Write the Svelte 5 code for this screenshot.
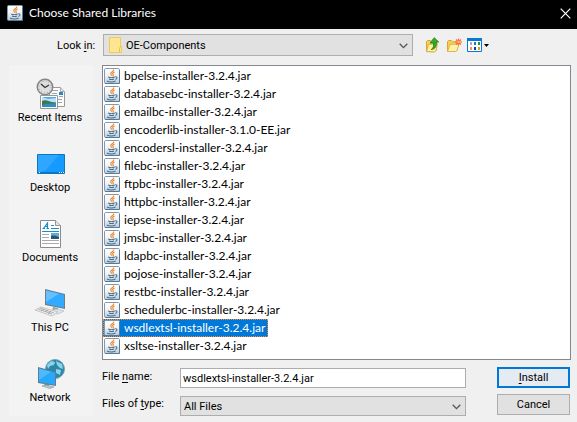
<script>
  const files = [
    'bpelse-installer-3.2.4.jar',
    'databasebc-installer-3.2.4.jar',
    'emailbc-installer-3.2.4.jar',
    'encoderlib-installer-3.1.0-EE.jar',
    'encodersl-installer-3.2.4.jar',
    'filebc-installer-3.2.4.jar',
    'ftpbc-installer-3.2.4.jar',
    'httpbc-installer-3.2.4.jar',
    'iepse-installer-3.2.4.jar',
    'jmsbc-installer-3.2.4.jar',
    'ldapbc-installer-3.2.4.jar',
    'pojose-installer-3.2.4.jar',
    'restbc-installer-3.2.4.jar',
    'schedulerbc-installer-3.2.4.jar',
    'wsdlextsl-installer-3.2.4.jar',
    'xsltse-installer-3.2.4.jar'
  ];
  const places = ['Recent Items', 'Desktop', 'Documents', 'This PC', 'Network'];
  let selected = $state('wsdlextsl-installer-3.2.4.jar');
</script>

{#snippet java()}
  <svg class="java" viewBox="0 0 16 16" aria-hidden="true">
    <defs>
      <linearGradient id="tile" x1="0" y1="0" x2="0" y2="1">
        <stop offset="0" stop-color="#fff" />
        <stop offset=".45" stop-color="#f1f4f7" />
        <stop offset="1" stop-color="#bccbd8" />
      </linearGradient>
    </defs>
    <rect x=".5" y=".5" width="15" height="15" rx="1.2" fill="url(#tile)" stroke="#8299ad" />
    <path d="M1 15.5h14.5V2" fill="none" stroke="#547b9c" />
    <path d="M9.700 1.500c.8 1.700-3 2.400-3 4 0 1 1 1.400 1 2.200M10.600 4c-2 .8-2.400 1.500-1.500 2.500.5.700.3 1.200-.4 1.700" fill="none" stroke="#ee8124" stroke-width="1.100" />
    <path d="M4.200 9c1.500.8 5 .7 6.500 0M5 11c1.600.6 3.600.6 5 0M3 13c2.300 1.100 6.400 1 8.600 0M11.200 8.800c2.400-.5 2.200 1.900.2 2.600" fill="none" stroke="#44708f" stroke-width="1.100" />
  </svg>
{/snippet}

{#snippet chevron()}
  <svg class="chevron" viewBox="0 0 9 6" aria-hidden="true"><path d="M.7.8 4.500 4.600 8.300.8" fill="none" stroke="#555" stroke-width="1.300" /></svg>
{/snippet}

<div class="dialog">
  <header>
    {@render java()}
    <h1>Choose Shared Libraries</h1>
    <button class="close" aria-label="Close">
      <svg width="11" height="11" viewBox="0 0 11 11"><path d="m.7.700 9.600 9.600M10.300.700.700 10.300" stroke="#fff" stroke-width="1.200" /></svg>
    </button>
  </header>

  <div class="lookin">
    <label for="folder">Look <u>i</u>n:</label>
    <div class="combo folder">
      <svg class="foldericon" width="13" height="16" viewBox="0 0 13 16" aria-hidden="true">
        <path d="M.5.500h11v9h1v6H.5z" fill="#ffe58f" stroke="#f0c95d" />
        <path d="M10.500 15v-3.500l1-2" fill="none" stroke="#e8be4b" />
      </svg>
      <select id="folder"><option>OE-Components</option></select>
      {@render chevron()}
    </div>
    <div class="tools">
      <button aria-label="Up one level">
        <svg width="16" height="16" viewBox="0 0 16 16">
          <path d="M1.500 14.500v-10l1-1h3l1 1.300h5v8l-2 2z" fill="#f4cf58" stroke="#d6a32c" />
          <path d="m1.500 14.500 2-7 9-1-1.500 7-1.500 1.500z" fill="#fff0a2" stroke="#ddb042" />
          <path d="M6.200 12.500c2.500-1.500 2.600-3.500 2.300-6.500H5.200L9.200.700 13.700 5h-2.500c.5 4.600-1 7.200-5 7.500z" fill="#35ac2a" stroke="#197a19" stroke-width=".8" />
        </svg>
      </button>
      <button aria-label="Create new folder">
        <svg width="16" height="16" viewBox="0 0 16 16">
          <path d="M1.500 14.500v-10l1-1h3l1 1.300h5v8l-2 1.700z" fill="#f3cd58" stroke="#d9a632" />
          <path d="m1.500 14.500 2.500-7 9-.5-2 6.500-1.500 1z" fill="#fff1a7" stroke="#e1b649" />
          <path d="M12.500 1.500v7M9 5h7M10 2.500l5 5M15 2.500l-5 5" stroke="#ff6540" stroke-width="1.200" />
          <circle cx="12.500" cy="5" r="1.300" fill="#ffc452" />
        </svg>
      </button>
      <button aria-label="View menu">
        <svg width="24" height="16" viewBox="0 0 24 16">
          <path d="M.5 1.500h14v13H.5z" fill="#fff" stroke="#0877d8" />
          <path d="M0 1h15v3H0z" fill="#0877d8" />
          <path d="M3 5h2v3H3z" fill="#ababc0" /><path d="M7 5h2v3H7z" fill="#2878d0" /><path d="M11 5h2v3h-2z" fill="#219344" />
          <path d="M3 10h2v3H3z" fill="#ff8a67" /><path d="M7 10h2v3H7z" fill="#173f7e" /><path d="M11 10h2v3h-2z" fill="#d3a223" />
          <path d="M17 7h5l-2.500 3z" fill="#000" />
        </svg>
      </button>
    </div>
  </div>

  <main>
    <nav aria-label="Places">
      {#each places as place, i}
        <button>
          <svg width="32" height="32" viewBox="0 0 32 32" aria-hidden="true">
            {#if i === 0}
              <path d="M15.500 9.500h11l4 4v15h-15z" fill="#fafafa" stroke="#999" />
              <path d="M26.500 9.500v4h4" fill="#e4e4e4" stroke="#aaa" />
              <path d="M18 12.500h6M18 15.500h5M24 21.500h4M24 24.500h4M25 18.500h4" stroke="#a5a5a5" />
              <path d="M25 14h4v3h-4z" fill="#2787c5" />
              <circle cx="11" cy="9" r="7.700" fill="#dedede" stroke="#858585" stroke-width="1.500" />
              <circle cx="11" cy="9" r="6" fill="none" stroke="#888" stroke-dasharray=".7 2.440" />
              <path d="m7 6 4 3.500 4-2.500" fill="none" stroke="#333" stroke-width="1.200" />
              <path d="M6.500 17.500h17v13h-17z" fill="#fff" stroke="#969696" />
              <path d="M8 19h14v10H8z" fill="#58a8df" />
              <path d="m8 19 6 2 8-1v4H8z" fill="#bfe1f5" />
              <path d="M8 23c4-2 7 1 14 2v4H8z" fill="#3b7852" />
              <path d="M8 27c5-2 9-1 14-2v4H8z" fill="#318dbd" />
            {:else if i === 1}
              <path d="M3.500 6.500h27v19h-27z" fill="#159bff" stroke="#0879bd" />
              <path d="M4 7h21L12 22l-8 3z" fill="#45afff" opacity=".55" />
              <path d="M4 24.500h26" stroke="#0879bd" />
              <path d="M5 24.500h1M25 24.500h1M27 24.500h1M29 24.500h1" stroke="#fff" />
            {:else if i === 2}
              <path d="M6.500 2.500h15l5 5v22h-20z" fill="#fff" stroke="#8b8b8b" />
              <path d="M21.500 2.500v5h5" fill="#e5e5e5" stroke="#949494" />
              <path d="m9.500 10.500 4-5.500v5.500M11 8.500h2.500M8.500 10.500h2.500M12.500 10.500h2.500" fill="none" stroke="#168bc6" stroke-width="1.200" />
              <path d="M17 7.500h3M17 10.500h8M8 13.500h17" stroke="#198fc8" />
              <path d="M8 16.500h7M8 19.500h7M8 22.500h17M8 25.500h17" stroke="#aaa" />
              <path d="M17 15h8v6h-8z" fill="#67a7da" />
              <path d="M17 18c3-1 5 0 8 1v2h-8z" fill="#28566b" />
            {:else if i === 3}
              <path d="m11 1 20 5v15l-20-4z" fill="#6a7e8e" />
              <path d="m12 2.500 18 4.300v13L12 16z" fill="#32aaff" />
              <path d="m12 2.500 13 3.200L12 14z" fill="#79c9ff" opacity=".7" />
              <path d="m19 19 5 1v4h-6z" fill="#8ba4b0" />
              <path d="m16 23 6-2 8 2-6 3-8-1z" fill="#dfe8ec" stroke="#a5b6bf" stroke-width=".6" />
              <path d="m1 22 6-3 17 5-6 4z" fill="#eee" stroke="#b5b5b5" stroke-width=".7" />
              <path d="m4 21 14 5M6 20l14 5M7 23l3-2M11 24l3-2M14 26l3-3" stroke="#999" stroke-width=".7" />
            {:else}
              <circle cx="21" cy="11" r="9.500" fill="#2a86ad" stroke="#72a5ba" />
              <path d="m13 7 4-4 4 1-1 3-4 1-2 3M22 3l6 3 1 5-3-1-3-3zm0 8 5 1-1 5-4-2z" fill="#8bd4e6" />
              <path d="m4 9 18 5v14L4 25z" fill="#5b7e96" />
              <path d="m5 10.500 16 4.300v12L5 24z" fill="#27a9fb" />
              <path d="m5 10.500 12 3.200L5 22z" fill="#69c4ff" opacity=".6" />
              <path d="m10 25 5 1v3h-4z" fill="#718895" />
              <path d="m8 28 4-1 8 2-4 1.500z" fill="#bccbd2" stroke="#7f929d" stroke-width=".6" />
            {/if}
          </svg>
          <span>{place}</span>
        </button>
      {/each}
    </nav>

    <section>
      <ul>
        {#each files as file}
          <li>
            <button class:selected={file === selected} aria-pressed={file === selected} onclick={() => (selected = file)}>
              {@render java()}
              <span>{file}</span>
            </button>
          </li>
        {/each}
      </ul>
      <form onsubmit={(e) => e.preventDefault()}>
        <label for="name">File <u>n</u>ame:</label>
        <input id="name" type="text" value={selected} />
        <button class="action primary" type="submit"><u>I</u>nstall</button>
        <label for="type">Files of <u>t</u>ype:</label>
        <div class="combo">
          <select id="type"><option>All Files</option></select>
          {@render chevron()}
        </div>
        <button class="action" type="button">Cancel</button>
      </form>
    </section>
  </main>
</div>

<style>
  :global(body) { margin: 0; background: #f0f0f0; }
  .dialog { min-height: 100vh; box-sizing: border-box; background: #f0f0f0; color: #000; font: 11px/14px Roboto, sans-serif; }
  .dialog * { box-sizing: border-box; }
  button, input, select { font: inherit; color: inherit; margin: 0; border: 0; border-radius: 0; padding: 0; background: none; }
  button svg { display: block; }
  u { text-underline-offset: 2px; }
  .java { width: 16px; height: 16px; flex: none; display: block; }

  header { display: flex; align-items: center; height: 29px; padding: 0 6px 3px 7px; background: #000; color: #fff; }
  h1 { flex: 1; margin: 0 0 0 6px; font: 12px/16px Lato, sans-serif; }
  .close { display: grid; place-items: center; width: 11px; height: 16px; }

  .lookin { display: flex; align-items: center; padding: 5px 0 9px 57px; }
  .lookin label { width: 46px; padding-top: 2px; }
  .combo { display: flex; position: relative; height: 22px; }
  .folder { flex: 1; }
  select { appearance: none; width: 100%; height: 100%; padding: 2px 24px 0 3px; border: 1px solid #adadad; background: #e1e1e1; }
  .folder select { padding-left: 22px; }
  .foldericon { position: absolute; left: 6px; top: 3px; }
  .chevron { position: absolute; right: 5px; top: 9px; width: 9px; height: 6px; }
  .tools { display: flex; gap: 5px; width: 164px; padding-left: 12px; }

  main { display: flex; gap: 8px; padding: 0 6px 6px 9px; }
  nav { width: 85px; flex: none; background: #f3f3f3; }
  nav button { display: flex; flex-direction: column; align-items: center; gap: 1px; width: 100%; height: 70px; padding: 13px 3px 0 0; }
  section { flex: 1; min-width: 0; }
  ul { list-style: none; margin: 0 0 7px; padding: 1px 0 4px; border: 1px solid #828790; background: #fff; }
  li { display: flex; height: 18px; }
  li button { display: flex; align-items: center; gap: 4px; height: 18px; padding: 0 3px 0 1px; font: 12px/16px Lato, sans-serif; white-space: nowrap; }
  .selected { background: #0078d7; color: #fff; outline: 1px dotted #ff8728; outline-offset: -1px; }

  form { display: grid; grid-template: 21px 22px / 78px 1fr 104px; row-gap: 6px; align-items: end; padding-right: 1px; }
  form label { align-self: start; padding-top: 3px; }
  input { width: 100%; height: 20px; border: 1px solid #abadb3; background: #fff; padding: 0 2px; }
  form .combo { height: 20px; }
  form .chevron { top: 8px; }
  .action { align-self: start; height: 21px; margin-left: 31px; border: 1px solid #adadad; background: #e1e1e1; }
  .primary { border: 2px solid #0078d7; background: #e5ebf3; }
</style>
